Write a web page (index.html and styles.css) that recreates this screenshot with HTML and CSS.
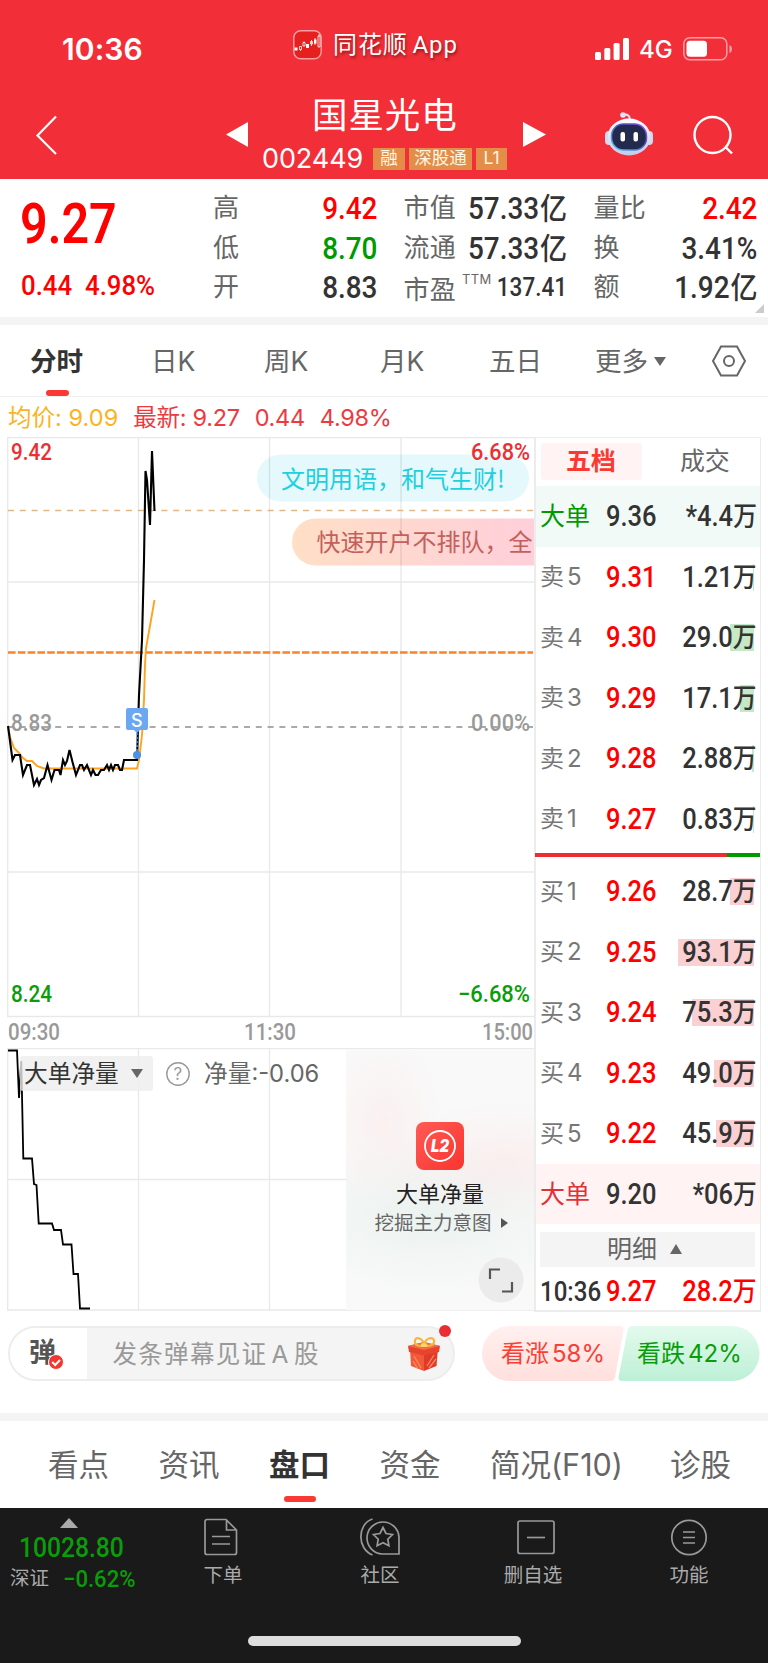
FILE: index.html
```html
<!DOCTYPE html>
<html lang="zh-CN">
<head>
<meta charset="utf-8">
<title>国星光电 002449</title>
<link rel="stylesheet" href="styles.css">
</head>
<body>
<header class="top">
  <div class="status">
    <span class="clock">10:36</span>
    <div class="brand">
      <svg width="29" height="30" viewBox="0 0 29 30"><rect x=".8" y=".8" width="27.4" height="28" rx="7" fill="#e5201f" stroke="#f9a0a2" stroke-width="1.4"/><path d="M1.5 17.5h3v3h-3zM13 14h3v4h-3zM21 9.500h2.500v4h-2.500z" fill="#fff"/><path d="M6.500 16.500h2v3h-2zM10 12.500h2v3.500h-2zM17.500 11.500h2v2.500h-2zM25 6h2v11h-2zM7.500 20v1M18.500 10v6M11 11.500v1M26 4v2M22 8v7" fill="none" stroke="#fff" stroke-width=".8"/></svg>
      <span>同花顺 App</span>
    </div>
    <svg class="signal" width="34" height="23" viewBox="0 0 34 23" fill="#fff"><rect x="0" y="14" width="6" height="8" rx="1.500"/><rect x="9.300" y="10" width="6" height="12" rx="1.500"/><rect x="18.600" y="5" width="6" height="17" rx="1.500"/><rect x="28" y="0" width="6" height="22" rx="1.500"/></svg>
    <span class="net">4G</span>
    <svg class="battery" width="50" height="24" viewBox="0 0 50 24"><rect x=".8" y=".8" width="43" height="22" rx="6" fill="none" stroke="#f9a0a4" stroke-width="1.500"/><rect x="3.500" y="3.800" width="20.500" height="16" rx="3.500" fill="#fff"/><path d="M46.500 8q2.500 1 2.500 4t-2.500 4z" fill="#f9a0a4"/></svg>
  </div>
  <div class="nav">
    <svg class="back" width="24" height="42" viewBox="0 0 24 42"><path d="M21 2.500 2.500 21.500 21 40" fill="none" stroke="#fff" stroke-width="2.200"/></svg>
    <svg class="prev" width="22" height="25" viewBox="0 0 22 25"><path d="M0 12.500 22 0v25z" fill="#fff"/></svg>
    <div class="stock">
      <h1>国星光电</h1>
      <div class="code"><span class="num">002449</span><i class="b1">融</i><i class="b2">深股通</i><i class="b3">L1</i></div>
    </div>
    <svg class="next" width="23" height="25" viewBox="0 0 23 25"><path d="M0 0 23 12.500 0 25z" fill="#fff"/></svg>
    <svg class="bot" width="48" height="44" viewBox="0 0 48 44">
      <defs><linearGradient id="hd" x1="0" y1="0" x2="0" y2="1"><stop offset="0" stop-color="#fff"/><stop offset="1" stop-color="#c5c9e8"/></linearGradient><linearGradient id="rim" x1="0" y1="1" x2="1" y2="0"><stop offset="0" stop-color="#55c5f5"/><stop offset=".6" stop-color="#4a50c0"/><stop offset="1" stop-color="#a050e8"/></linearGradient></defs>
      <path d="M18 3q7-2 7 6" fill="none" stroke="#dadcf0" stroke-width="2.200"/><circle cx="18" cy="3" r="2.800" fill="#e4e5f4"/>
      <rect x="0" y="19" width="8" height="14" rx="4" fill="#d5d8ee"/><rect x="40" y="19" width="8" height="14" rx="4" fill="#d5d8ee"/>
      <ellipse cx="24" cy="25" rx="21.500" ry="18.500" fill="url(#hd)"/><rect x="6.500" y="12" width="35" height="26" rx="12" fill="#222a4d" stroke="url(#rim)" stroke-width="1.500"/>
      <rect x="15.500" y="20" width="4.500" height="9.500" rx="2" fill="#fff"/><rect x="28.500" y="20" width="4.500" height="9.500" rx="2" fill="#fff"/>
    </svg>
    <svg class="search" width="40" height="40" viewBox="0 0 40 40" fill="none" stroke="#fff" stroke-width="2.400"><circle cx="19.500" cy="20" r="18"/><path d="m32 31.500 7 7"/></svg>
  </div>
</header>

<section class="quote">
  <div class="last"><b class="din">9.27</b><div><span class="din">0.44</span><span class="din pct">4.98%</span></div></div>
  <div class="facts">
    <label>高</label><span class="v red">9.42</span><label>市值</label><span class="v">57.33<em>亿</em></span><label>量比</label><span class="v red">2.42</span>
    <label>低</label><span class="v green">8.70</span><label>流通</label><span class="v">57.33<em>亿</em></span><label>换</label><span class="v">3.41%</span>
    <label>开</label><span class="v">8.83</span><label class="pe">市盈<sup>TTM</sup></label><span class="v small">137.41</span><label>额</label><span class="v">1.92<em>亿</em></span>
  </div>
  <i class="corner"></i>
</section>

<nav class="periods">
  <span class="on">分时</span><span>日K</span><span>周K</span><span>月K</span><span>五日</span><span>更多<i class="down"></i></span>
  <svg width="36" height="32" viewBox="0 0 36 32" fill="none" stroke="#666" stroke-width="2"><path d="M10 1.500h16L34 16l-8 14.500H10L2 16z"/><circle cx="18" cy="16" r="5"/></svg>
</nav>

<div class="legend"><span class="avg">均价: 9.09</span><span>最新: 9.27</span><span>0.44</span><span>4.98%</span></div>

<main class="market">
  <section class="charts">
    <svg class="plot" width="528" height="612" viewBox="7 437 528 612">
      <defs><linearGradient id="pk"><stop offset="0" stop-color="#ffdfc6"/><stop offset="1" stop-color="#ffcfda"/></linearGradient></defs>
      <path d="M257 478a23.500 23.500 0 0 1 23.500-23.500h225a23.500 23.500 0 0 1 0 47h-225A23.500 23.500 0 0 1 257 478" fill="#e5f8fc"/>
      <path d="M534 518.500H315.500a23.500 23.500 0 0 0 0 47H534z" fill="url(#pk)"/>
      <g fill="none" stroke="#000" stroke-opacity=".09" stroke-width="1.300"><path d="M7 437.500h527M7 582h527M7 872h527M7 1016.500h527M7.700 437v579M138.500 437v579M269.500 437v579M401 437v579"/></g>
      <path d="M8 510.500h525" stroke="#dfb787" stroke-width="1.300" stroke-dasharray="6 5.800"/>
      <path d="M8 652.500h525" stroke="#fb8325" stroke-width="2.300" stroke-dasharray="7.600 2.200"/>
      <path d="M8 727h525" stroke="#aaa" stroke-width="1.800" stroke-dasharray="6 5.800"/>
      <text class="tick grey" x="11" y="731" textLength="41" lengthAdjust="spacingAndGlyphs">8.83</text><text class="tick grey" x="471" y="731" textLength="59" lengthAdjust="spacingAndGlyphs">0.00%</text>
      <path d="M8 726 10 737 14 748 19 753 23 758 27 761H32L37 766 44 768.500H137L139 760 142 735 144 700 145 665 146 648 148 637 151 620 154.500 600" fill="none" stroke="#ffa21f" stroke-width="1.900"/>
      <path d="M8 726 12.500 760 15 755H20L23 775 27 765H30L34 785 37 779 39 785 41 780 44 778 47.500 765 51.500 780 54.500 770H59L60.500 775 63 760 65 765 67 761 69.500 750 72.500 762 76 775 80 765H82L84 770 87 765 91 775 93 770 95.500 775H98L101 770H104L107 765 109 770 111 765 113 770 115 765H118L120 770H122L124 760H137L139 695 142 640 144 560 145.500 471 147 480 150 525 152 451 154.500 511" fill="none" stroke="#000" stroke-width="2.100"/>
      <path d="M137 733v20" stroke="#5a9bee" stroke-width="1.500" stroke-dasharray="2 2"/><path d="M128 708h18a2 2 0 0 1 2 2v18a2 2 0 0 1-2 2h-6l-3 3-3-3h-6a2 2 0 0 1-2-2v-18a2 2 0 0 1 2-2" fill="#6ba8f1"/><circle cx="137" cy="755" r="4" fill="#4d90e8"/>
      <text class="mark" x="131" y="726.500">S</text>
      <text class="tick redt" x="11" y="460" textLength="41" lengthAdjust="spacingAndGlyphs">9.42</text><text class="tick redt" x="471" y="460" textLength="59" lengthAdjust="spacingAndGlyphs">6.68%</text>
      <text class="tick greent" x="11" y="1002" textLength="41" lengthAdjust="spacingAndGlyphs">8.24</text><text class="tick greent" x="458" y="1002" textLength="72" lengthAdjust="spacingAndGlyphs">−6.68%</text>
      <text class="time" x="8" y="1040" textLength="52" lengthAdjust="spacingAndGlyphs">09:30</text><text class="time" x="244" y="1040" textLength="52" lengthAdjust="spacingAndGlyphs">11:30</text><text class="time" x="482" y="1040" textLength="51" lengthAdjust="spacingAndGlyphs">15:00</text>
      <text class="say" x="281" y="487.500" fill="#20d0df">文明用语，和气生财!</text>
      <text class="say" x="316.500" y="551" fill="#c3605d">快速开户不排队，全</text>
    </svg>
    <div class="flow">
      <svg class="netline" width="528" height="263" viewBox="7 1048 528 263" fill="none"><path d="M7 1048.600h527M7 1179.500h527M7 1310h527M7.700 1048v262M138.500 1048v262M269.500 1048v262" stroke="#e9e9e9" stroke-width="1.300"/><path d="M8 1050.500H17L19 1098 21.300 1061 23.300 1158.500H32L34 1184 36.500 1185 38.700 1223.500H52L54 1230H61L63 1244.500H71.500L73.500 1274H78L80 1308.500H90" stroke="#000" stroke-width="1.800"/></svg>
      <div class="metric"><span class="pick">大单净量<i class="down"></i></span><svg width="24" height="24" viewBox="0 0 24 24"><circle cx="12" cy="12" r="11.200" fill="none" stroke="#999" stroke-width="1.400"/><text x="7.500" y="18">?</text></svg><span class="netv">净量:-0.06</span></div>
      <div class="promo">
        <svg width="48" height="48" viewBox="0 0 48 48"><defs><linearGradient id="l2" x2="1" y2="1"><stop stop-color="#ff5a55"/><stop offset="1" stop-color="#f9352f"/></linearGradient></defs><rect width="48" height="48" rx="8" fill="url(#l2)"/><circle cx="24" cy="24" r="15" fill="none" stroke="#fff" stroke-width="1.800"/><text x="15" y="30" textLength="18" lengthAdjust="spacingAndGlyphs">L2</text></svg>
        <b>大单净量</b><p>挖掘主力意图<i></i></p>
        <svg class="expand" width="46" height="46" viewBox="0 0 46 46"><circle cx="23" cy="23" r="22.500" fill="#ebebeb"/><path d="M12 22v-9.500h10M34 25v9.500H24" fill="none" stroke="#555" stroke-width="2.200"/></svg>
      </div>
    </div>
  </section>
  <aside class="book">
    <div class="tabs"><span class="on">五档</span><span>成交</span></div>
    <div class="row big sell"><label>大单</label><b>9.36</b><span>*4.4<em>万</em></span></div>
    <div class="row s"><label>卖<u>5</u></label><b>9.31</b><i style="width:1px"></i><span>1.21<em>万</em></span></div>
    <div class="row s"><label>卖<u>4</u></label><b>9.30</b><i style="width:24px"></i><span>29.0<em>万</em></span></div>
    <div class="row s"><label>卖<u>3</u></label><b>9.29</b><i style="width:14px"></i><span>17.1<em>万</em></span></div>
    <div class="row s"><label>卖<u>2</u></label><b>9.28</b><i style="width:2px"></i><span>2.88<em>万</em></span></div>
    <div class="row s"><label>卖<u>1</u></label><b>9.27</b><i style="width:.6px"></i><span>0.83<em>万</em></span></div>
    <div class="ratio"></div>
    <div class="row"><label>买<u>1</u></label><b>9.26</b><i style="width:24px"></i><span>28.7<em>万</em></span></div>
    <div class="row"><label>买<u>2</u></label><b>9.25</b><i style="width:76px"></i><span>93.1<em>万</em></span></div>
    <div class="row"><label>买<u>3</u></label><b>9.24</b><i style="width:62px"></i><span>75.3<em>万</em></span></div>
    <div class="row"><label>买<u>4</u></label><b>9.23</b><i style="width:40px"></i><span>49.0<em>万</em></span></div>
    <div class="row"><label>买<u>5</u></label><b>9.22</b><i style="width:38px"></i><span>45.9<em>万</em></span></div>
    <div class="row big buy"><label>大单</label><b>9.20</b><span>*06<em>万</em></span></div>
    <div class="detail">明细<i></i></div>
    <div class="row deal"><label>10:36</label><b>9.27</b><span>28.2<em>万</em></span></div>
  </aside>
</main>

<section class="barrage">
  <div class="input">
    <div class="dan">弹<svg width="16" height="16" viewBox="0 0 16 16"><circle cx="8" cy="8" r="7.500" fill="#f5352f" stroke="#fff"/><path d="m4.200 8 3 3 4.800-5" fill="none" stroke="#fff" stroke-width="2"/></svg></div>
    <span>发条弹幕见证 A 股</span>
    <svg class="gift" width="34" height="36" viewBox="0 0 34 36"><path d="M3 12 17 16v19L4 30z" fill="#f05a39"/><path d="M17 16l14-4-1.500 18L17 35z" fill="#df3a2b"/><path d="M1 10 17 6l16 4-1 6-15 3.500L2 16z" fill="#e8432f"/><path d="M1 10 17 6l16 4-16 4z" fill="#f46a45"/><path d="m7 20 7 12M20 30l7-11M22 32l7-9M6 25l5 8" stroke="#ff8b5a" stroke-width="1.300"/><path d="M17 9C12 11 7 9 8 4.500s8-2.500 9 4.500c1-7 9-9 10-4.500s-5 6.500-10 4.500" fill="none" stroke="#f6b63c" stroke-width="2.200"/><path d="M14 7.500h6v3.500h-6z" fill="#ffd36a"/></svg>
    <i class="dot"></i>
  </div>
  <div class="votes">
    <svg width="279" height="56" viewBox="0 0 279 56"><defs><linearGradient id="up" x2="0" y2="1"><stop stop-color="#fff0ef"/><stop offset="1" stop-color="#ffe0dd"/></linearGradient><linearGradient id="dn" x2="0" y2="1"><stop stop-color="#e3faed"/><stop offset="1" stop-color="#bdf0d6"/></linearGradient></defs><path d="M27.500 0H138q4 0 3.500 4l-8.500 47q-.8 4-4.500 4h-101a27.500 27.500 0 0 1 0-55" fill="url(#up)"/><path d="M150.500 0H250a27.500 27.500 0 0 1 0 55H140q-4 0-3.400-4l9-47q.8-4 4.900-4" fill="url(#dn)"/></svg>
    <span class="up">看涨<u>58%</u></span><span class="dn">看跌<u>42%</u></span>
  </div>
</section>

<nav class="sections"><span>看点</span><span>资讯</span><span class="on">盘口</span><span>资金</span><span>简况<u>(F10)</u></span><span>诊股</span></nav>

<footer class="dock">
  <div class="index"><i></i><b class="din">10028.80</b><div><span>深证</span><em class="din">−0.62%</em></div></div>
  <div class="item i1"><svg width="36" height="38" viewBox="0 0 36 38"><path d="M4 1.500h19L33.500 12v22.500a2 2 0 0 1-2 2H4a2 2 0 0 1-2-2v-31a2 2 0 0 1 2-2M23.500 1.500V12h10M9 18.500h18M9 26h18"/></svg>下单</div>
  <div class="item i2"><svg width="42" height="38" viewBox="0 0 42 38"><path d="M13.500 1C-2 6-2 31 13.500 37M40 36H23.500a16 16 0 1 1 16.500-16.500zM24 9.500l3 6 6.500 1-4.700 4.700 1.100 6.600-5.900-3.100-5.900 3.100 1.100-6.600-4.700-4.700 6.500-1z"/></svg>社区</div>
  <div class="item i3"><svg width="38" height="38" viewBox="0 0 38 38"><rect x="1" y="3" width="36" height="32.500" rx="2"/><path d="M10 19.500h18"/></svg>删自选</div>
  <div class="item i4"><svg width="38" height="38" viewBox="0 0 38 38"><circle cx="19" cy="19.500" r="17.200"/><path d="M13 14h12M13 19.500h12M13 25h12"/></svg>功能</div>
  <div class="home"></div>
</footer>
</body>
</html>
```
FILE: styles.css
```css
* { box-sizing: border-box; }
body { margin: 0; width: 768px; background: #fff; color: #333; font-family: Inter, "Noto Sans CJK SC", sans-serif; line-height: 1; }
i, em { font-style: normal; }
u { text-decoration: none; }
h1, p { margin: 0; }
svg { display: block; flex: none; }
.din { display: inline-block; font-family: Roboto, "Noto Sans CJK SC", sans-serif; font-weight: 500; transform: scaleX(.88); transform-origin: left; white-space: nowrap; }

.top { height: 179px; background: #f22f38; color: #fff; }
.status { height: 98px; display: flex; align-items: center; padding-left: 62px; }
.clock { width: 231px; font-size: 30px; font-weight: 600; letter-spacing: .1px; }
.brand { width: 302px; display: flex; gap: 11px; margin-top: -9px; align-items: center; font-family: Roboto, "Noto Sans CJK SC", sans-serif; }
.brand span { font-size: 24px; word-spacing: -2px; letter-spacing: .9px; padding-top: 1px; text-shadow: 1px 2px 3px rgba(80,0,0,.6); }
.net { font-size: 24px; font-weight: 500; width: 43px; margin-left: 10px; margin-right: 1px; padding-top: 1px; }
.nav { height: 81px; display: flex; }
.back { margin: 16px 0 0 35px; }
.prev { margin: 24px 0 0 167px; }
.stock { width: 257px; margin-left: 15px; margin-right: 3px; }
.stock h1 { font-size: 35.500px; font-weight: 400; letter-spacing: .9px; padding-left: 49px; height: 49px; line-height: 36px; }
.code { display: flex; align-items: center; height: 22px; margin-top: 1px; }
.code .num { font-size: 27px; width: 110px; flex: none; margin: -2px 0 0 -1px; letter-spacing: -.1px; }
.code i { height: 22px; margin-right: 4px; background: #e38d48; color: #fff6e4; font-size: 17.500px; line-height: 20px; text-align: center; flex: none; }
.b1 { width: 32px; margin-left: 1px; }
.b2 { width: 63px; }
.b3 { width: 31px; }
.next { margin-top: 24px; }
.bot { margin: 14px 0 0 59px; }
.search { margin: 17px 0 0 40px; }

.quote { position: relative; display: flex; height: 146px; border-bottom: 8px solid #f4f4f4; }
.last { width: 213px; padding: 18px 0 0 20px; color: #f00; }
.last b { font-size: 55px; line-height: 55px; display: block; font-weight: 600; }
.last > div { display: flex; margin-top: 20px; font-size: 28px; padding-left: 1px; }
.last > div .din { width: 64px; transform: scaleX(.92); }
.last div .pct { width: auto; }
.facts { display: grid; grid-template-columns: 63px 101px 91px 99px 71px 119px; grid-template-rows: repeat(3, 39.600px); padding-top: 10px; }
.facts label { font-size: 26px; line-height: 38px; color: #666; white-space: nowrap; letter-spacing: .3px; }
.facts label:nth-child(6n+3), .facts label:nth-child(6n+5) { padding-left: 26.500px; }
.v { font-family: Roboto, "Noto Sans CJK SC", sans-serif; font-size: 31px; font-weight: 500; line-height: 39px; transform: scaleX(.9); transform-origin: right; justify-self: end; white-space: nowrap; }
.v em { font-size: 30px; margin-left: 1px; }
.v.small { font-size: 25px; }
.facts .pe { line-height: 43px; }
.pe sup { font-size: 13px; line-height: 10px; vertical-align: 15px; margin-left: 6px; }
.red { color: #f00; }
.green { color: #090; }
.corner { position: absolute; left: 755px; top: 125px; width: 0; height: 0; border-left: 9px solid transparent; border-bottom: 9px solid #ccc; }

.periods { height: 72px; border-bottom: 1px solid #eee; display: flex; align-items: center; font-size: 26.500px; color: #666; }
.periods > span { flex: none; width: 116px; height: 71px; line-height: 72px; }
.periods > span:first-child { width: 122px; padding-left: 30px; margin-right: 29px; color: #333; font-weight: 600; position: relative; }
.periods > span:nth-child(2) { width: 113px; }
.periods > span:nth-child(4) { width: 109px; }
.periods > span:nth-child(5) { width: 106px; }
.periods .on::after { content: ""; position: absolute; left: 46px; bottom: 0; width: 23px; height: 6px; border-radius: 3px; background: #fa3a32; }
.down { display: inline-block; border: solid transparent; border-width: 9px 6.500px 0; border-top-color: #666; margin-left: 6px; vertical-align: 5px; }
.periods > svg { margin-left: 0; }

.legend { height: 40px; display: flex; align-items: center; gap: 15px; padding: 2px 0 0 8px; font-size: 23.500px; letter-spacing: -.3px; color: #ec3b40; }
.legend .avg { color: #fdb321; letter-spacing: .05px; }

.market { height: 875px; display: flex; padding-left: 7px; }
.charts { width: 529px; overflow: hidden; border-right: 2px solid #ececec; }
.tick { font: 500 24px Roboto, sans-serif; }
.redt { fill: #ec2f32; }
.greent { fill: #0a9d0a; }
.grey { fill: #999; }
.time { font: 500 24px Roboto, sans-serif; fill: #999; }
.mark { font: 500 18px Inter, sans-serif; fill: #fff; }
.say { font: 24px "Noto Sans CJK SC", sans-serif; }
.flow { display: grid; height: 263px; margin-top: -1px; grid-template-columns: 527px; }
.flow > * { grid-area: 1 / 1; }
.metric { display: flex; align-items: center; height: 35px; margin: 8px 0 0 13px; position: relative; }
.pick { width: 133px; height: 35px; background: rgba(238,238,238,.8); border-radius: 3px; font-size: 23.700px; line-height: 35px; padding-left: 4px; white-space: nowrap; color: #333; }
.pick .down { margin-left: 12px; vertical-align: 4px; }
.metric svg { margin: 0 14px 0 13px; }
.metric text { font: 17px Inter, sans-serif; fill: #999; }
.netv { font-size: 23.700px; color: #666; }
.promo { position: relative; justify-self: end; width: 188px; height: 261px; margin-top: 1px; display: flex; flex-direction: column; align-items: center; padding: 73px 0 0; background: radial-gradient(ellipse 60px 90px at 20% 28%, rgba(255,220,220,.3), transparent), radial-gradient(ellipse 120px 60px at 85% 43%, rgba(255,220,220,.35), transparent), radial-gradient(ellipse 170px 80px at 45% 64%, rgba(225,238,233,.6), transparent), #f9f9f9; }
.promo text { font: italic 900 17px Inter, sans-serif; fill: #fff; }
.promo b { font-size: 22px; font-weight: 400; line-height: 30px; margin-top: 9px; color: #222; }
.promo p { font-size: 19.500px; color: #666; white-space: nowrap; margin-top: 3px; line-height: 22px; padding-left: 2px; }
.promo p i { display: inline-block; border: solid transparent; border-width: 5.500px 0 5.500px 7px; border-left-color: #555; margin-left: 9px; vertical-align: 2px; }
.expand { position: absolute; left: 132px; top: 208px; }

.book { width: 225px; border: solid #ececec; border-width: 1px 1px 2px 0; }
.tabs { display: flex; height: 48px; padding: 5px 0 0 5px; font-size: 25px; }
.tabs span { height: 37px; line-height: 36px; width: 101px; color: #666; padding-left: 25px; letter-spacing: -.2px; }
.tabs span + span { margin-left: 13px; }
.tabs .on { background: #fff3f3; border-radius: 3px; color: #fa3a32; font-weight: 600; }
.row { position: relative; display: flex; align-items: center; height: 60.500px; padding: 1px 0 0 4px; font-family: Roboto, "Noto Sans CJK SC", sans-serif; font-size: 29px; }
.row label { width: 66px; flex: none; font-size: 24px; color: #777; white-space: nowrap; font-family: Inter, "Noto Sans CJK SC", sans-serif; }
.row u { margin-left: 3px; }
.row b { font-weight: 500; color: #f00; transform: scaleX(.88); transform-origin: left; }
.row span { position: absolute; right: 3.500px; font-weight: 500; transform: scaleX(.88); transform-origin: right; white-space: nowrap; }
.row span em { font-size: 27px; }
.row i { position: absolute; right: 6.500px; top: 17px; height: 27px; background: #fbd0d3; }
.row.s i { background: #c5e8c5; }
.big label { font-size: 25px; color: #e03236; }
.big b { color: #333; }
.big.sell { background: #f1faf6; }
.big.sell label { color: #090; }
.big.buy { background: #fff3f3; }
.ratio { height: 4px; margin: 4px 0 4px -1px; background: linear-gradient(90deg, #ee2c32 192px, #090 192px); }
.detail { margin: 8px 0 0 4px; width: 215px; height: 35px; background: #f4f4f4; color: #666; font-size: 25px; line-height: 35px; padding-left: 67px; }
.detail i { display: inline-block; border: solid transparent; border-width: 0 6.500px 10px; border-bottom-color: #666; margin-left: 13px; vertical-align: 4px; }
.deal { height: 47px; }
.deal label { font: 500 28px Roboto, sans-serif; color: #333; transform: scaleX(.86); transform-origin: left; }
.deal span { color: #f00; }

.barrage { height: 109px; border-bottom: 8px solid #f4f4f4; padding: 14px 0 0 8px; display: flex; }
.input { position: relative; width: 447px; height: 55px; border: 2px solid #ededed; border-radius: 28px; background: #f4f4f4; display: flex; }
.dan { width: 77px; background: #fff; border-radius: 26px 0 0 26px; font-size: 27px; font-weight: 700; color: #555; padding-left: 19px; line-height: 49px; position: relative; }
.dan svg { position: absolute; left: 38px; top: 26px; }
.input > span { font-size: 24.500px; letter-spacing: 1.300px; word-spacing: -4px; color: #999; line-height: 53px; margin-left: 25.500px; white-space: nowrap; }
.gift { position: absolute; left: 397px; top: 8px; }
.dot { position: absolute; left: 429px; top: -3px; width: 12px; height: 12px; border-radius: 50%; background: #ea2d32; }
.votes { display: grid; margin-left: 27px; width: 279px; height: 55px; }
.votes > * { grid-area: 1 / 1; }
.votes span { font-size: 24px; line-height: 56px; position: relative; white-space: nowrap; }
.votes u { margin-left: 3px; }
.up { color: #fa3f36; padding-left: 19px; }
.dn { color: #0a9d0a; padding-left: 155px; }

.sections { display: flex; height: 87px; line-height: 88px; padding-left: 48px; font-size: 30.500px; color: #666; }
.sections span { width: 110.500px; flex: none; white-space: nowrap; }
.sections span:nth-child(5) { width: 180px; }
.sections span:last-child { width: 70px; }
.sections .on { color: #333; font-weight: 600; position: relative; }
.sections .on::after { content: ""; position: absolute; left: 14.500px; bottom: 6px; width: 32px; height: 6px; border-radius: 3px; background: #fa3a32; }

.dock { height: 155px; background: #1a1a1a; color: #aaa; position: relative; display: flex; }
.index { width: 165px; padding: 10px 0 0 10px; }
.index > i { display: block; width: 0; border: solid transparent; border-width: 0 9px 10px; border-bottom-color: #aaa; margin-left: 50px; }
.index b { display: block; font-size: 28px; color: #0a9d0a; margin: 6px 0 0 9px; }
.index > div { display: flex; align-items: center; font-size: 19.500px; height: 31px; margin-top: 1px; }
.index em { font-size: 24px; color: #0a9d0a; margin-left: 14px; transform: scaleX(.92); }
.item { display: flex; flex-direction: column; align-items: center; width: 116px; padding-top: 10px; font-size: 19.500px; gap: 10px; flex: none; }
.item svg { fill: none; stroke: #999; stroke-width: 1.700; }
.i1 svg { margin-right: 4px; }
.i2 { margin-left: 41px; }
.i3 { margin-left: 37px; }
.i3 svg { margin-left: 5px; }
.i4 { margin-left: 40px; }
.home { position: absolute; left: 248px; top: 128px; width: 273px; height: 10px; border-radius: 5px; background: #ddd; }
```
